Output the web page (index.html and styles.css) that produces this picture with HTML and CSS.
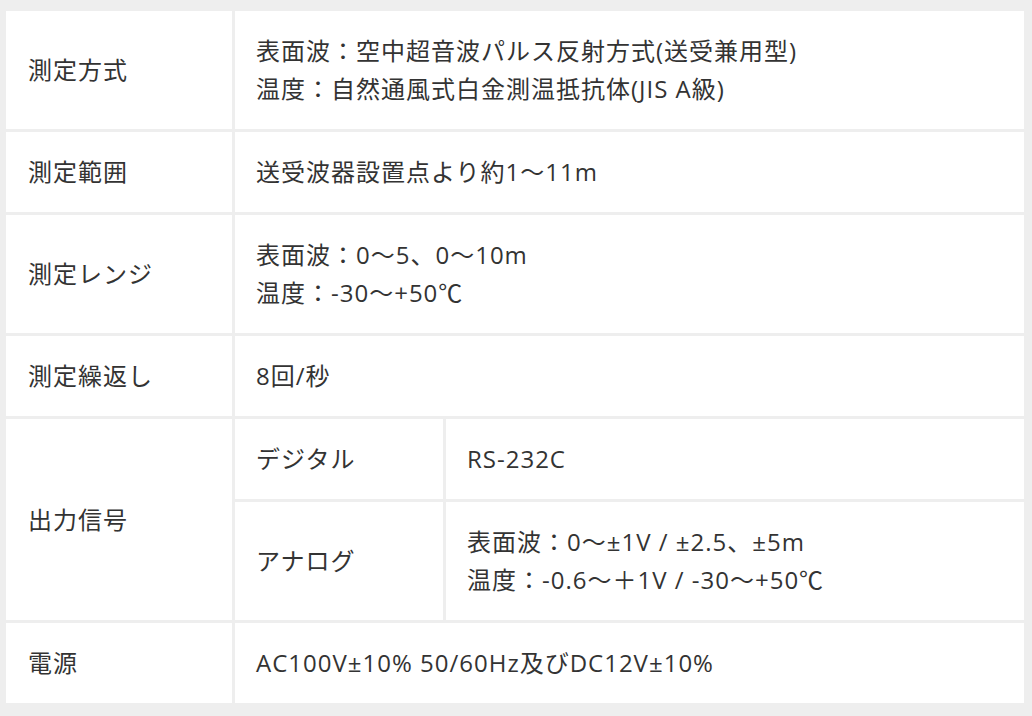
FILE: index.html
```html
<!DOCTYPE html>
<html lang="ja">
<head>
<meta charset="utf-8">
<title>仕様</title>
<link rel="stylesheet" href="styles.css">
</head>
<body>
<table class="spec">
  <colgroup>
    <col class="c-head">
    <col class="c-sub">
    <col class="c-val">
  </colgroup>
  <tbody>
    <tr class="r-2">
      <th>測定方式</th>
      <td colspan="2">表面波：空中超音波パルス反射方式(送受兼用型)<br>温度：自然通風式白金測温抵抗体(JIS A級)</td>
    </tr>
    <tr>
      <th>測定範囲</th>
      <td colspan="2">送受波器設置点より約1～11m</td>
    </tr>
    <tr class="r-2">
      <th>測定レンジ</th>
      <td colspan="2">表面波：0～5、0～10m<br>温度：-30～+50℃</td>
    </tr>
    <tr>
      <th>測定繰返し</th>
      <td colspan="2">8回/秒</td>
    </tr>
    <tr>
      <th rowspan="2">出力信号</th>
      <td>デジタル</td>
      <td>RS-232C</td>
    </tr>
    <tr>
      <td>アナログ</td>
      <td>表面波：0～±1V / ±2.5、±5m<br>温度：-0.6～＋1V / -30～+50℃</td>
    </tr>
    <tr>
      <th>電源</th>
      <td colspan="2">AC100V±10% 50/60Hz及びDC12V±10%</td>
    </tr>
  </tbody>
</table>
</body>
</html>
```

FILE: styles.css
```css
html, body {
  margin: 0;
  padding: 0;
  background: #eeeeee;
}

body {
  padding: 8px 5px 0 3px;
  font-family: "Open Sans", "Noto Sans CJK JP", sans-serif;
  font-size: 24px;
  letter-spacing: 1px;
  color: #333333;
}

.spec {
  width: 1024px;
  table-layout: fixed;
  border-collapse: separate;
  border-spacing: 3px;
}

.c-head { width: 226px; }
.c-sub { width: 208px; }
.c-val { width: 578px; }

.spec th,
.spec td {
  background: #ffffff;
  padding: 21px 22px 21px 22px;
  line-height: 38px;
  text-align: left;
  vertical-align: middle;
  font-weight: normal;
}

.spec th {
  padding-left: 22px;
}

.spec td {
  padding-left: 21px;
}
```
